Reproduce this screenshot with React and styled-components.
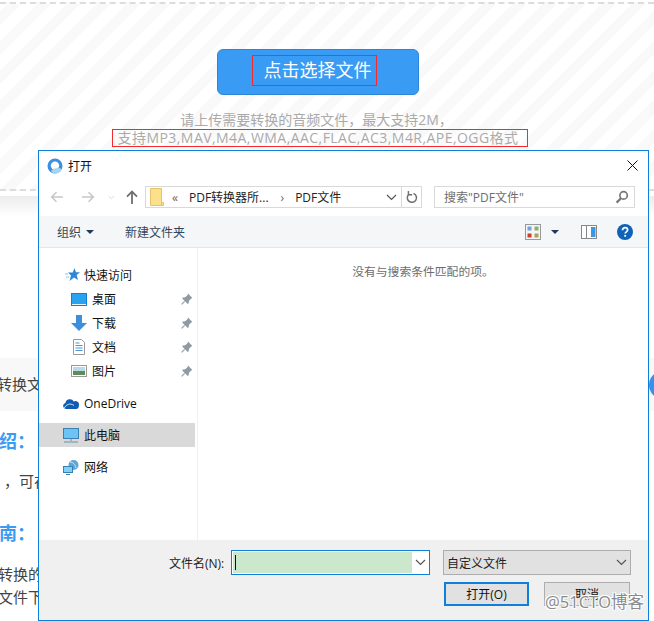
import React from 'react';
import styled, { createGlobalStyle } from 'styled-components';

const GlobalStyle = createGlobalStyle`
   html, body {
      margin: 0;
      padding: 0;
      background: #fff;
   }
   body {
      font-family: "Open Sans", "Noto Sans CJK SC", sans-serif;
      overflow: hidden;
   }
   * {
      box-sizing: border-box;
   }
`;

const Page = styled.div`
   position: relative;
   width: 654px;
   height: 621px;
   overflow: hidden;
   background: #fff;
`;

const UploadArea = styled.div`
   margin-top: 2px;
   height: 189px;
   border-top: 2px dashed #dcdcdc;
   border-bottom: 2px dashed #dcdcdc;
   background: repeating-linear-gradient(-45deg, #fff 0 11px, #f9f9f9 11px 21px);
   display: flex;
   flex-direction: column;
   align-items: center;
   padding: 45px 18px 0 0;
`;

const UploadButton = styled.div`
   width: 202px;
   height: 46px;
   background: #3a9bf4;
   border: 1px solid #2c86d8;
   border-radius: 6px;
   display: flex;
   align-items: center;
   justify-content: center;
   color: #fff;
   font-size: 18px;
   padding: 0 8px 3px 0;
`;

const Marked = styled.span`
   border: 1px solid #f52a2a;
   line-height: ${(p) => p.$lineHeight}px;
   padding: ${(p) => p.$padding};
   white-space: nowrap;
   letter-spacing: ${(p) => p.$spacing || 0}px;
`;

const Hint = styled.div`
   margin-top: 16px;
   color: #aaa;
   font-size: 14px;
   line-height: 18px;
   white-space: nowrap;
   display: flex;
   flex-direction: column;
   align-items: center;
   margin-left: 4px;
`;

const HintLine = styled.span`
   margin-right: 7px;
`;

const ShadowBand = styled.div`
   margin-top: 5px;
   height: 20px;
   background: linear-gradient(#ececec, #fff);
`;

const Article = styled.div`
   padding-top: 142px;
   color: #444;
   font-size: 15px;
   white-space: nowrap;
`;

const ToolRow = styled.div`
   height: 53px;
   background: #f8f8f8;
   line-height: 53px;
   text-indent: -3px;
`;

const SectionTitle = styled.div`
   margin-top: ${(p) => p.$top}px;
   color: #3a9bf4;
   font-size: 18px;
   font-weight: 700;
   line-height: 24px;
   text-indent: ${(p) => p.$indent}px;
`;

const Para = styled.div`
   margin-top: ${(p) => p.$top}px;
   line-height: 23px;
   text-indent: ${(p) => p.$indent}px;
`;

const SideBubble = styled.div`
   position: absolute;
   left: 649px;
   top: 371px;
   width: 28px;
   height: 28px;
   border-radius: 50%;
   background: #3a8eef;
`;

const Dialog = styled.div`
   position: absolute;
   left: 38px;
   top: 150px;
   width: 611px;
   height: 471px;
   background: #fff;
   border: 1px solid #0f7fdc;
   display: flex;
   flex-direction: column;
   color: #222;
   font-size: 12px;
`;

const TitleBar = styled.div`
   height: 29px;
   display: flex;
   align-items: center;
   padding: 0 10px 0 8px;
   gap: 5px;
   flex: none;
`;

const TitleText = styled.span`
   flex: 1;
   color: #111;
`;

const NavRow = styled.div`
   height: 36px;
   flex: none;
   display: flex;
   align-items: flex-start;
   padding: 6px 13px 0 3px;
`;

const NavButton = styled.div`
   width: ${(p) => p.$w}px;
   height: 22px;
   display: flex;
   align-items: center;
   justify-content: center;
   flex: none;
`;

const AddressBox = styled.div`
   width: 277px;
   height: 22px;
   border: 1px solid #d9d9d9;
   display: flex;
   align-items: center;
   padding-left: 4px;
   flex: none;
`;

const Crumb = styled.span`
   margin-left: ${(p) => p.$left}px;
   color: ${(p) => p.$color || '#222'};
   white-space: nowrap;
`;

const AddressEnd = styled.div`
   margin-left: auto;
   display: flex;
   align-items: center;
   height: 100%;
`;

const RefreshCell = styled.div`
   width: 20px;
   height: 100%;
   border-left: 1px solid #d9d9d9;
   display: flex;
   align-items: center;
   justify-content: center;
   margin-left: 4px;
`;

const SearchBox = styled.div`
   width: 201px;
   height: 22px;
   margin-left: 12px;
   border: 1px solid #d9d9d9;
   display: flex;
   align-items: center;
   justify-content: space-between;
   padding: 0 5px 0 9px;
   color: #6d6d6d;
   flex: none;
`;

const CommandBar = styled.div`
   height: 32px;
   flex: none;
   background: #f5f6f7;
   border-bottom: 1px solid #e6e6e6;
   display: flex;
   align-items: center;
   padding: 0 15px 0 18px;
   color: #33465c;
`;

const Command = styled.span`
   display: flex;
   align-items: center;
   gap: 5px;
   margin-right: ${(p) => p.$right || 0}px;
`;

const CommandIcons = styled.div`
   margin-left: auto;
   display: flex;
   align-items: center;
`;

const Caret = styled.span`
   width: 0;
   height: 0;
   border-left: 4px solid transparent;
   border-right: 4px solid transparent;
   border-top: 4px solid #1f3a5c;
   margin: ${(p) => p.$margin || 0};
`;

const Main = styled.div`
   flex: 1;
   display: flex;
   min-height: 0;
`;

const Sidebar = styled.div`
   width: 159px;
   flex: none;
   border-right: 1px solid #f0f0f0;
   padding-top: 15px;
   display: flex;
   flex-direction: column;
   gap: 8px;
`;

const TreeGroup = styled.div`
   display: flex;
   flex-direction: column;
`;

const TreeRow = styled.div`
   width: 156px;
   height: 24px;
   display: flex;
   align-items: center;
   background: ${(p) => (p.$selected ? '#d9d9d9' : 'transparent')};
   padding-left: ${(p) => p.$indent}px;
   color: #111;
`;

const TreeLabel = styled.span`
   margin-left: ${(p) => p.$left}px;
   flex: 1;
`;

const PinSlot = styled.span`
   width: 14px;
   display: flex;
   align-items: center;
`;

const IconSlot = styled.span`
   width: ${(p) => p.$w}px;
   height: 16px;
   display: flex;
   align-items: center;
   justify-content: center;
   flex: none;
`;

const FileArea = styled.div`
   flex: 1;
   text-align: center;
   padding-top: 15px;
   color: #6d6d6d;
   font-size: 11.8px;
   line-height: 16px;
`;

const Footer = styled.div`
   height: 80px;
   flex: none;
   background: #f0f0f0;
   padding: 10px 0 0 130px;
   display: flex;
   flex-direction: column;
   gap: 7px;
`;

const FieldRow = styled.div`
   display: flex;
   align-items: center;
   height: 25px;
`;

const FieldLabel = styled.span`
   width: 62px;
   flex: none;
   white-space: nowrap;
`;

const FileInput = styled.div`
   width: 199px;
   height: 25px;
   background: #fff;
   border: 1px solid #0f7fdc;
   display: flex;
   align-items: stretch;
   padding: 1px 0 1px 1px;
   flex: none;
`;

const InputFill = styled.div`
   width: 179px;
   background: #cbe8cc;
   display: flex;
   align-items: center;
   padding-left: 2px;
`;

const CaretLine = styled.span`
   width: 1px;
   height: 15px;
   background: #111;
`;

const InputChevron = styled.div`
   flex: 1;
   display: flex;
   align-items: center;
   justify-content: center;
`;

const TypeSelect = styled.div`
   width: 188px;
   height: 25px;
   margin-left: 13px;
   background: #e1e1e1;
   border: 1px solid #adadad;
   display: flex;
   align-items: center;
   justify-content: space-between;
   padding: 0 3px 0 3px;
   flex: none;
`;

const ButtonRow = styled.div`
   display: flex;
   gap: 15px;
   margin-left: 275px;
`;

const DialogButton = styled.div`
   width: ${(p) => p.$w}px;
   height: 24px;
   background: #e1e1e1;
   border: ${(p) => (p.$primary ? '2px solid #0f7fdc' : '1px solid #adadad')};
   display: flex;
   align-items: center;
   justify-content: center;
   color: #111;
`;

const Watermark = styled.div`
   position: absolute;
   left: 545px;
   top: 592px;
   color: #8a8a8a;
   font-size: 16.5px;
   line-height: 20px;
   white-space: nowrap;
   text-shadow: 1px 1px 0 #fff, -1px -1px 0 #fff, 1px -1px 0 #fff, -1px 1px 0 #fff;
`;

const Chevron = ({ color = '#555', size = 11 }) => (
   <svg width={size} height="7" viewBox="0 0 11 7" fill="none">
      <path d="M1 1l4.500 4.500L10 1" stroke={color} strokeWidth="1.200" />
   </svg>
);

const ArrowLeft = ({ color, flip }) => (
   <svg width="14" height="12" viewBox="0 0 14 12" fill="none" style={flip ? { transform: 'scaleX(-1)' } : undefined}>
      <path d="M13 6H2M6.500 1.200L1.700 6l4.800 4.800" stroke={color} strokeWidth="1.600" />
   </svg>
);

const ArrowUp = () => (
   <svg width="12" height="14" viewBox="0 0 12 14" fill="none">
      <path d="M6 14V2M1 6.600L6 1.600l5 5" stroke="#6f6f6f" strokeWidth="1.800" />
   </svg>
);

const FolderIcon = () => (
   <svg width="14" height="18" viewBox="0 0 14 18">
      <path d="M.5.5h11v14h2v3H.5z" fill="#fde08c" stroke="#e3c26a" />
      <path d="M11.500 14.500v3" stroke="#e3c26a" />
   </svg>
);

const RefreshIcon = () => (
   <svg width="12" height="14" viewBox="0 0 12 14" fill="none">
      <path d="M7.500 3.400A4.600 4.600 0 1 1 3.200 4" stroke="#6f6f6f" strokeWidth="1.500" />
      <path d="M2.400 1v3.800h3.800" stroke="#6f6f6f" strokeWidth="1.400" />
   </svg>
);

const SearchIcon = () => (
   <svg width="14" height="14" viewBox="0 0 14 14" fill="none">
      <circle cx="8.600" cy="5.400" r="3.700" stroke="#777" strokeWidth="1.700" />
      <path d="M6 8.200L1.600 12.600" stroke="#777" strokeWidth="2.200" />
   </svg>
);

const CloseIcon = () => (
   <svg width="11" height="11" viewBox="0 0 11 11" fill="none">
      <path d="M.5.5l10 10M10.500.5l-10 10" stroke="#111" strokeWidth="1" />
   </svg>
);

const AppIcon = () => (
   <svg width="16" height="16" viewBox="0 0 16 16">
      <circle cx="8" cy="8" r="7.500" fill="#3b8fe0" />
      <circle cx="8" cy="7.600" r="4.200" fill="#fff" />
      <path d="M4 13c2-3 7-4 11-2-1.500 3-4 4.500-7 4.500-1.500 0-3-1-4-2.500z" fill="#a8d4f4" />
   </svg>
);

const ViewIcon = () => (
   <svg width="16" height="16" viewBox="0 0 16 16">
      <rect x=".5" y=".5" width="15" height="15" fill="#f4f4f4" stroke="#999" />
      <rect x="2.500" y="2.500" width="4" height="4" fill="#6fa6d6" />
      <rect x="9.500" y="2.500" width="4" height="4" fill="#86b07a" />
      <rect x="2.500" y="9.500" width="4" height="4" fill="#c8402c" />
      <rect x="9.500" y="9.500" width="4" height="4" fill="#a9a15a" />
   </svg>
);

const PaneIcon = () => (
   <svg width="16" height="14" viewBox="0 0 16 14">
      <rect x=".5" y=".5" width="15" height="13" fill="#fff" stroke="#888" />
      <rect x="10" y="2" width="4.500" height="10" fill="#3b96e6" />
      <path d="M5.500 1v12" stroke="#888" />
   </svg>
);

const HelpIcon = () => (
   <svg width="16" height="16" viewBox="0 0 16 16">
      <circle cx="8" cy="8" r="8" fill="#0f62b8" />
      <path d="M5.500 6.200c0-1.600 1.100-2.500 2.600-2.500s2.500.9 2.500 2.200c0 1.900-2.400 1.900-2.400 3.700" fill="none" stroke="#fff" strokeWidth="1.700" />
      <rect x="7.300" y="10.900" width="1.800" height="1.800" fill="#fff" />
   </svg>
);

const PinIcon = () => (
   <svg width="12" height="12" viewBox="0 0 12 12">
      <path d="M7 .6l4.400 4.400-1.200.6-2.300 2.300-.2 2.300-1 .8L1.200 5.500l.8-1 2.300-.2 2.300-2.300z" fill="#8f9aa3" />
      <path d="M3.600 8.400L.6 11.400" stroke="#8f9aa3" strokeWidth="1.200" />
   </svg>
);

const StarIcon = () => (
   <svg width="15" height="14" viewBox="0 0 15 14">
      <path d="M9.500 0l1.400 4.300H15l-3.300 2.700 1.300 5L9 9.500 4.500 13l1.500-5.500L3 4.500h4.700z" fill="#2f86d8" />
      <path d="M0 6h3M1 9h3" stroke="#8cc3ee" />
   </svg>
);

const DesktopIcon = () => (
   <svg width="16" height="13" viewBox="0 0 16 13">
      <rect width="16" height="13" fill="#0f7fdc" />
      <rect x="1" y="1" width="14" height="10" fill="#29a3f0" />
      <path d="M1 11.500h14" stroke="#e8f4fc" />
   </svg>
);

const DownloadIcon = () => (
   <svg width="16" height="16" viewBox="0 0 16 16">
      <path d="M5 0h6v8h5l-8 8-8-8h5z" fill="#3c8fdd" />
   </svg>
);

const DocIcon = () => (
   <svg width="12" height="16" viewBox="0 0 12 16">
      <path d="M.5.5h8l3 3v12H.5z" fill="#fff" stroke="#9a9a9a" />
      <path d="M2.500 4h4M2.500 6.500h7M2.500 9h7M2.500 11.500h7" stroke="#4a94d8" />
   </svg>
);

const PictureIcon = () => (
   <svg width="16" height="12" viewBox="0 0 16 12">
      <rect x=".5" y=".5" width="15" height="11" fill="#fff" stroke="#9a9a9a" />
      <rect x="2" y="2" width="12" height="4" fill="#bcd9ea" />
      <rect x="2" y="6" width="12" height="4" fill="#5f8a5a" />
   </svg>
);

const CloudIcon = () => (
   <svg width="16" height="11" viewBox="0 0 16 11">
      <path d="M3 11a3 3 0 0 1-.6-5.900A4.500 4.500 0 0 1 10.800 3.500 3.600 3.600 0 0 1 15.800 8c0 1.700-1 3-2.800 3z" fill="#0f5cb0" />
      <path d="M1 10.500c2-4 6-6 10-3" fill="none" stroke="#fff" strokeWidth=".8" />
   </svg>
);

const ComputerIcon = () => (
   <svg width="16" height="15" viewBox="0 0 16 15">
      <rect x=".5" y=".5" width="15" height="10" fill="#6cc3f5" stroke="#3f7fae" />
      <path d="M1 14h14" stroke="#8aa8c0" strokeWidth="1.500" />
      <path d="M7 11h2v2H7z" fill="#9db6c8" />
   </svg>
);

const NetworkIcon = () => (
   <svg width="16" height="15" viewBox="0 0 16 15">
      <circle cx="10.500" cy="5" r="5" fill="#5aa6d8" />
      <path d="M7 2c3 0 5 2 6 6" fill="none" stroke="#cfe6f5" />
      <rect x=".5" y="6.500" width="9" height="6" fill="#7fd0f8" stroke="#3a7fae" />
      <path d="M3 14.500h4" stroke="#3a7fae" />
   </svg>
);

const quickLinks = [
   { label: '桌面', icon: <DesktopIcon /> },
   { label: '下载', icon: <DownloadIcon /> },
   { label: '文档', icon: <DocIcon /> },
   { label: '图片', icon: <PictureIcon /> }
];

const App = () => (
   <Page>
      <GlobalStyle />
      <UploadArea>
         <UploadButton>
            <Marked $lineHeight={29} $padding="0 4px 0 11px">点击选择文件</Marked>
         </UploadButton>
         <Hint>
            <HintLine>请上传需要转换的音频文件，最大支持2M，</HintLine>
            <Marked $lineHeight={16} $padding="0 9px 0 5px" $spacing={0.45}>支持MP3,MAV,M4A,WMA,AAC,FLAC,AC3,M4R,APE,OGG格式</Marked>
         </Hint>
      </UploadArea>
      <ShadowBand />
      <Article>
         <ToolRow>转换文</ToolRow>
         <SectionTitle $top={18} $indent={-1}>绍：</SectionTitle>
         <Para $top={17} $indent={4}>，可在</Para>
         <SectionTitle $top={28} $indent={-1}>南：</SectionTitle>
         <Para $top={18} $indent={-2}>转换的</Para>
         <Para $top={0} $indent={-2}>文件下</Para>
      </Article>
      <SideBubble />
      <Dialog>
         <TitleBar>
            <AppIcon />
            <TitleText>打开</TitleText>
            <CloseIcon />
         </TitleBar>
         <NavRow>
            <NavButton $w={30}><ArrowLeft color="#c8c8c8" /></NavButton>
            <NavButton $w={32}><ArrowLeft color="#c8c8c8" flip /></NavButton>
            <NavButton $w={14}><Chevron color="#d0d0d0" size={7} /></NavButton>
            <NavButton $w={27}><ArrowUp /></NavButton>
            <AddressBox>
               <FolderIcon />
               <Crumb $left={8} $color="#666">«</Crumb>
               <Crumb $left={11}>PDF转换器所...</Crumb>
               <Crumb $left={12} $color="#666">›</Crumb>
               <Crumb $left={11}>PDF文件</Crumb>
               <AddressEnd>
                  <Chevron />
                  <RefreshCell><RefreshIcon /></RefreshCell>
               </AddressEnd>
            </AddressBox>
            <SearchBox>
               <span>搜索"PDF文件"</span>
               <SearchIcon />
            </SearchBox>
         </NavRow>
         <CommandBar>
            <Command $right={31}>组织<Caret /></Command>
            <Command>新建文件夹</Command>
            <CommandIcons>
               <ViewIcon />
               <Caret $margin="0 22px 0 10px" />
               <PaneIcon />
               <IconSlot $w={20} />
               <HelpIcon />
            </CommandIcons>
         </CommandBar>
         <Main>
            <Sidebar>
               <TreeGroup>
                  <TreeRow $indent={26}>
                     <IconSlot $w={15}><StarIcon /></IconSlot>
                     <TreeLabel $left={4}>快速访问</TreeLabel>
                  </TreeRow>
                  {quickLinks.map((link) => (
                     <TreeRow key={link.label} $indent={32}>
                        <IconSlot $w={16}>{link.icon}</IconSlot>
                        <TreeLabel $left={5}>{link.label}</TreeLabel>
                        <PinSlot><PinIcon /></PinSlot>
                     </TreeRow>
                  ))}
               </TreeGroup>
               <TreeRow $indent={24}>
                  <IconSlot $w={16}><CloudIcon /></IconSlot>
                  <TreeLabel $left={5}>OneDrive</TreeLabel>
               </TreeRow>
               <TreeRow $indent={24} $selected>
                  <IconSlot $w={16}><ComputerIcon /></IconSlot>
                  <TreeLabel $left={5}>此电脑</TreeLabel>
               </TreeRow>
               <TreeRow $indent={24}>
                  <IconSlot $w={16}><NetworkIcon /></IconSlot>
                  <TreeLabel $left={5}>网络</TreeLabel>
               </TreeRow>
            </Sidebar>
            <FileArea>没有与搜索条件匹配的项。</FileArea>
         </Main>
         <Footer>
            <FieldRow>
               <FieldLabel>文件名(N):</FieldLabel>
               <FileInput>
                  <InputFill><CaretLine /></InputFill>
                  <InputChevron><Chevron /></InputChevron>
               </FileInput>
               <TypeSelect>
                  <span>自定义文件</span>
                  <Chevron />
               </TypeSelect>
            </FieldRow>
            <ButtonRow>
               <DialogButton $primary $w={85}>打开(O)</DialogButton>
               <DialogButton $w={86}>取消</DialogButton>
            </ButtonRow>
         </Footer>
      </Dialog>
      <Watermark>@51CTO博客</Watermark>
   </Page>
);

export default App;
